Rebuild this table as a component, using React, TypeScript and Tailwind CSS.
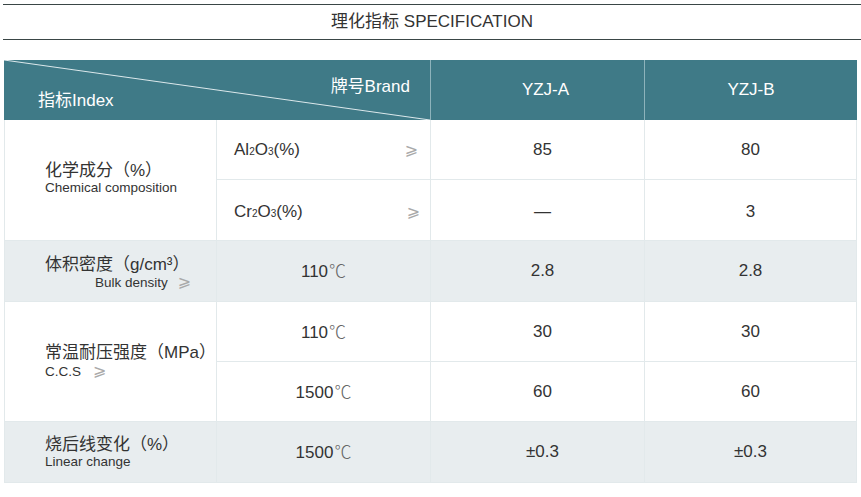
import React from 'react';

const cell = 'border-r border-b border-[#e2e9eb] flex items-center';
const gray = 'bg-[#e8edef]';

const Geq = ({ className = '' }: { className?: string }) => (
  <span className={`font-['DejaVu_Sans',sans-serif] text-[16px] text-[#a9a9a9] ${className}`}>⩾</span>
);

const Temp = ({ t }: { t: string }) => (
  <span>
    {t}
    <span className="font-['Noto_Sans_CJK_SC',sans-serif] font-light text-[#666] ml-[1px]">℃</span>
  </span>
);

const App = () => {
  return (
    <div className="w-[861px] h-[497px] bg-white text-[#333] font-['Liberation_Sans','Noto_Sans_CJK_SC',sans-serif]">
      <div className="ml-[3px] mt-[4px] h-[36px] border-t border-b border-[#3a4646] flex items-center justify-center text-[17px]">
        理化指标 SPECIFICATION
      </div>

      <div className="ml-[4px] mt-[20px] w-[853px] grid grid-cols-[213px_214px_214px_212px] grid-rows-[60px_60px_61px_61px_60px_60px_61px] text-[17px]">
        {/* header */}
        <div className="col-span-2 relative bg-[#3f7a87] border-r border-[#8db3bb] grid text-white">
          <svg className="absolute inset-0 w-full h-full" viewBox="0 0 427 60" preserveAspectRatio="none">
            <line x1="0" y1="0" x2="427" y2="60" stroke="#dde9ec" strokeWidth="1" />
          </svg>
          <span className="col-start-1 row-start-1 justify-self-end mt-[14px] mr-[20px]">牌号Brand</span>
          <span className="col-start-1 row-start-1 justify-self-start mt-[28px] ml-[34px]">指标Index</span>
        </div>
        <div className="bg-[#3f7a87] border-r border-[#8db3bb] flex items-center justify-center pl-[16px] text-white">YZJ-A</div>
        <div className="bg-[#3f7a87] flex items-center justify-center text-white">YZJ-B</div>

        {/* chemical composition */}
        <div className={`${cell} row-span-2 border-l pl-[40px] pb-[4px]`}>
          <div className="flex flex-col">
            <span className="leading-[19px]">化学成分（%）</span>
            <span className="text-[13.5px] leading-[16px]">Chemical composition</span>
          </div>
        </div>
        <div className={`${cell} justify-between pl-[17px] pr-[12px]`}>
          <span>Al<span className="text-[10px]">2</span>O<span className="text-[10px]">3</span>(%)</span>
          <Geq />
        </div>
        <div className={`${cell} justify-center pl-[10px]`}>85</div>
        <div className={`${cell} justify-center`}>80</div>

        <div className={`${cell} justify-between pl-[17px] pr-[10px] pt-[3px]`}>
          <span>Cr<span className="text-[10px]">2</span>O<span className="text-[10px]">3</span>(%)</span>
          <Geq />
        </div>
        <div className={`${cell} justify-center pl-[10px] pt-[3px]`}>—</div>
        <div className={`${cell} justify-center pt-[3px]`}>3</div>

        {/* bulk density */}
        <div className={`${cell} ${gray} border-l pl-[40px] pt-[4px]`}>
          <div className="flex flex-col">
            <span className="leading-[19px]">体积密度（g/cm³）</span>
            <span className="text-[13.5px] leading-[16px] pl-[50px]">
              Bulk density <Geq className="ml-[6px]" />
            </span>
          </div>
        </div>
        <div className={`${cell} ${gray} justify-center`}><Temp t="110" /></div>
        <div className={`${cell} ${gray} justify-center pl-[10px]`}>2.8</div>
        <div className={`${cell} ${gray} justify-center`}>2.8</div>

        {/* c.c.s */}
        <div className={`${cell} row-span-2 border-l pl-[40px]`}>
          <div className="flex flex-col">
            <span className="leading-[19px]">常温耐压强度（MPa）</span>
            <span className="text-[13.5px] leading-[18px]">
              C.C.S <Geq className="ml-[8px]" />
            </span>
          </div>
        </div>
        <div className={`${cell} justify-center`}><Temp t="110" /></div>
        <div className={`${cell} justify-center pl-[10px]`}>30</div>
        <div className={`${cell} justify-center`}>30</div>

        <div className={`${cell} justify-center`}><Temp t="1500" /></div>
        <div className={`${cell} justify-center pl-[10px]`}>60</div>
        <div className={`${cell} justify-center`}>60</div>

        {/* linear change */}
        <div className={`${cell} ${gray} border-l pl-[40px]`}>
          <div className="flex flex-col">
            <span className="leading-[19px]">烧后线变化（%）</span>
            <span className="text-[13.5px] leading-[16px]">Linear change</span>
          </div>
        </div>
        <div className={`${cell} ${gray} justify-center`}><Temp t="1500" /></div>
        <div className={`${cell} ${gray} justify-center pl-[10px]`}>±0.3</div>
        <div className={`${cell} ${gray} justify-center`}>±0.3</div>
      </div>
    </div>
  );
};

export default App;
